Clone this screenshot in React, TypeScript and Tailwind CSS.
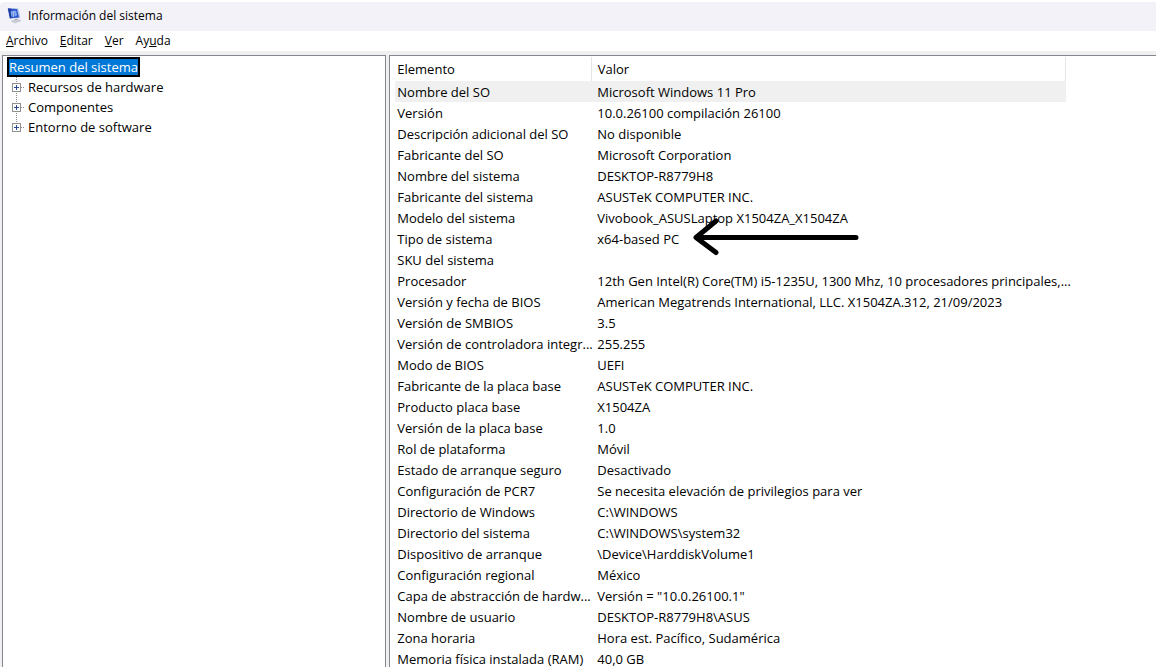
import React from "react";

const rows: [string, string][] = [
  ["Nombre del SO", "Microsoft Windows 11 Pro"],
  ["Versión", "10.0.26100 compilación 26100"],
  ["Descripción adicional del SO", "No disponible"],
  ["Fabricante del SO", "Microsoft Corporation"],
  ["Nombre del sistema", "DESKTOP-R8779H8"],
  ["Fabricante del sistema", "ASUSTeK COMPUTER INC."],
  ["Modelo del sistema", "Vivobook_ASUSLaptop X1504ZA_X1504ZA"],
  ["Tipo de sistema", "x64-based PC"],
  ["SKU del sistema", ""],
  ["Procesador", "12th Gen Intel(R) Core(TM) i5-1235U, 1300 Mhz, 10 procesadores principales,..."],
  ["Versión y fecha de BIOS", "American Megatrends International, LLC. X1504ZA.312, 21/09/2023"],
  ["Versión de SMBIOS", "3.5"],
  ["Versión de controladora integr...", "255.255"],
  ["Modo de BIOS", "UEFI"],
  ["Fabricante de la placa base", "ASUSTeK COMPUTER INC."],
  ["Producto placa base", "X1504ZA"],
  ["Versión de la placa base", "1.0"],
  ["Rol de plataforma", "Móvil"],
  ["Estado de arranque seguro", "Desactivado"],
  ["Configuración de PCR7", "Se necesita elevación de privilegios para ver"],
  ["Directorio de Windows", "C:\\WINDOWS"],
  ["Directorio del sistema", "C:\\WINDOWS\\system32"],
  ["Dispositivo de arranque", "\\Device\\HarddiskVolume1"],
  ["Configuración regional", "México"],
  ["Capa de abstracción de hardw...", "Versión = \"10.0.26100.1\""],
  ["Nombre de usuario", "DESKTOP-R8779H8\\ASUS"],
  ["Zona horaria", "Hora est. Pacífico, Sudamérica"],
  ["Memoria física instalada (RAM)", "40,0 GB"],
];

function AppIcon() {
  return (
    <svg width="16" height="16" viewBox="0 0 16 16" aria-hidden="true">
      <path d="M1.500 0 12.500 .5 14.500 10 3.500 11Z" fill="#bcc8ea" />
      <path d="M2 .5 11 1 13 9.500 4 10.200Z" fill="#2d55cc" />
      <path d="M2 .5 5 .7 5.500 10 4 10.200Z" fill="#1c389f" />
      <path d="M4.500 3.500 6.500 3V8.500L5.500 8.700ZM8 2.500 10.200 3 11 7.500 8.500 8.500Z" fill="#82abf5" />
      <path d="M6.700 3 7.700 3V9H7Z" fill="#e3ecfd" />
      <path d="M8.500 11 11.500 10.700 12 12.500 9 13Z" fill="#a9adba" />
      <path d="M5.500 13 11 11.800 15 12.500 9 15Z" fill="#d0d3dc" stroke="#a8acba" strokeWidth=".5" />
    </svg>
  );
}

function ExpandIcon({ last }: { last: boolean }) {
  return (
    <svg width="15" height="20" viewBox="0 0 15 20" shapeRendering="crispEdges" aria-hidden="true">
      <path d={last ? "M5.500 0V5M10 10.500H14" : "M5.500 0V20M10 10.500H14"} stroke="#8c8c8c" strokeDasharray="1 1" />
      <rect x="1.500" y="6.500" width="8" height="8" fill="#fff" stroke="#919191" />
      <path d="M3 10.500H8M5.500 8V13" stroke="#31479b" />
    </svg>
  );
}

function Arrow() {
  return (
    <svg
      className="pointer-events-none absolute -top-3 left-[101px]"
      width="168"
      height="42"
      viewBox="0 0 168 42"
      aria-hidden="true"
    >
      <path d="M24 5 4 21.500H164M4 21.500 24 36.500" fill="none" stroke="#000" strokeWidth="5" strokeLinecap="round" strokeLinejoin="round" />
    </svg>
  );
}

const branches = ["Recursos de hardware", "Componentes", "Entorno de software"];

export default function App() {
  return (
    <div className="flex h-screen flex-col overflow-hidden bg-white font-['Open_Sans','Noto_Sans',sans-serif] text-[13px] text-black">
      <header className="mt-0.5 flex h-[29px] shrink-0 items-center gap-1.5 rounded-tl-sm bg-[#f3f2f9] pb-0.5 pl-1.5 text-[12px]">
        <AppIcon />
        <h1 className="leading-4">Información del sistema</h1>
      </header>
      <nav className="flex h-5 shrink-0 items-center gap-3 pl-1.5 text-[12px]">
        <button className="leading-4"><u>A</u>rchivo</button>
        <button className="leading-4"><u>E</u>ditar</button>
        <button className="leading-4"><u>V</u>er</button>
        <button className="leading-4">Ay<u>u</u>da</button>
      </nav>
      <main className="flex min-h-0 grow gap-[3px] bg-[#f0f0f0] pt-1 pl-0.5">
        <aside className="w-[33.3%] shrink-0 border border-b-0 border-[#828790] bg-white pt-px pl-1">
          <ul>
            <li className="flex">
              <button className="h-5 border-2 border-black bg-[#0078d7] leading-4 text-white">Resumen del sistema</button>
            </li>
            {branches.map((name, i) => (
              <li key={name}>
                <button className="flex h-5 items-center gap-0.5 pl-1">
                  <ExpandIcon last={i === branches.length - 1} />
                  <span className="leading-5">{name}</span>
                </button>
              </li>
            ))}
          </ul>
        </aside>
        <section className="min-w-0 grow overflow-hidden border border-r-0 border-b-0 border-[#828790] bg-white pt-px pl-[5px]">
          <table className="w-[671px] table-fixed border-collapse text-left">
            <thead>
              <tr className="h-6">
                <th className="w-[196px] border-r border-[#e5e5e5] p-0 pl-0.5 leading-5 font-normal">Elemento</th>
                <th className="border-r border-[#e5e5e5] p-0 pl-1.5 leading-5 font-normal">Valor</th>
              </tr>
            </thead>
            <tbody>
              {rows.map(([name, value], i) => (
                <tr key={name} className={i === 0 ? "h-[21px] bg-[#f0f0f0]" : "h-[21px]"}>
                  <td className="p-0 pl-0.5 leading-5 whitespace-nowrap">{name}</td>
                  <td className="relative p-0 pl-1.5 leading-5 whitespace-nowrap">
                    {value}
                    {name === "Tipo de sistema" && <Arrow />}
                  </td>
                </tr>
              ))}
            </tbody>
          </table>
        </section>
      </main>
    </div>
  );
}
